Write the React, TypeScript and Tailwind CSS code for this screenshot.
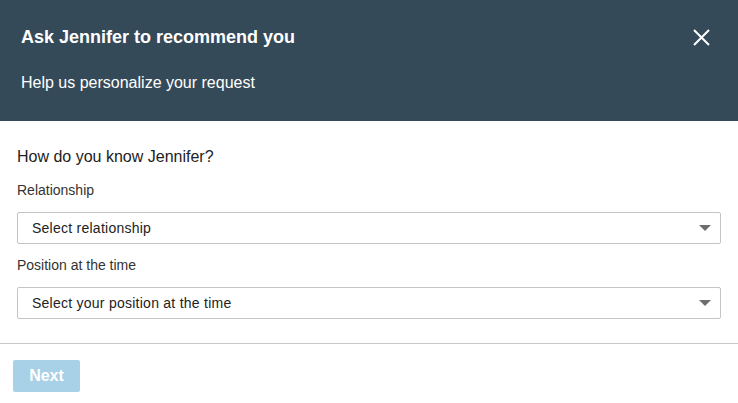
import React from 'react'

function SelectBox({ label, placeholder }: { label: string; placeholder: string }): React.JSX.Element {
  return (
    <div>
      <div className="text-[14px] leading-[18px] text-[#333]">{label}</div>
      <div className="mt-[13px] h-[32px] border border-[#c4c4c4] rounded-[2px] flex items-center justify-between pl-[14px] pr-[8px]">
        <span className="text-[14px] tracking-[0.25px] text-[#222]">{placeholder}</span>
        {/* dropdown caret */}
        <svg width="12" height="6" viewBox="0 0 12 6" className="mr-[1px]">
          <path d="M0 0 L12 0 L6 6 Z" fill="#6e6e6e" />
        </svg>
      </div>
    </div>
  )
}

export default function App(): React.JSX.Element {
  return (
    <div
      className="w-[738px] h-[403px] bg-white overflow-hidden"
      style={{ fontFamily: '"Liberation Sans", Arial, sans-serif' }}
    >
      <div className="h-[121px] bg-[#354a59] text-white px-[21px] pt-[25px] relative">
        <h2 className="text-[18px] font-bold leading-[24px]">Ask Jennifer to recommend you</h2>
        <p className="mt-[24px] text-[16px] leading-[20px]">Help us personalize your request</p>
        <button className="absolute right-[28px] top-[28px] w-[18px] h-[18px] flex items-center justify-center">
          <svg width="17" height="17" viewBox="0 0 17 17">
            <path d="M1 1 L16 16 M16 1 L1 16" stroke="#ffffff" strokeWidth="2" />
          </svg>
        </button>
      </div>
      <div className="px-[17px] pt-[26px]">
        <div className="text-[16px] leading-[20px] text-[#222]">How do you know Jennifer?</div>
        <div className="mt-[14px] flex flex-col gap-[12px]">
          <SelectBox label="Relationship" placeholder="Select relationship" />
          <SelectBox label="Position at the time" placeholder="Select your position at the time" />
        </div>
      </div>
      <div className="mt-[24px] border-t border-[#c8c8c8] px-[13px] pt-[16px]">
        <button className="w-[67px] h-[32px] bg-[#a8d0e6] rounded-[2px] text-white font-bold text-[16px]">
          Next
        </button>
      </div>
    </div>
  )
}
